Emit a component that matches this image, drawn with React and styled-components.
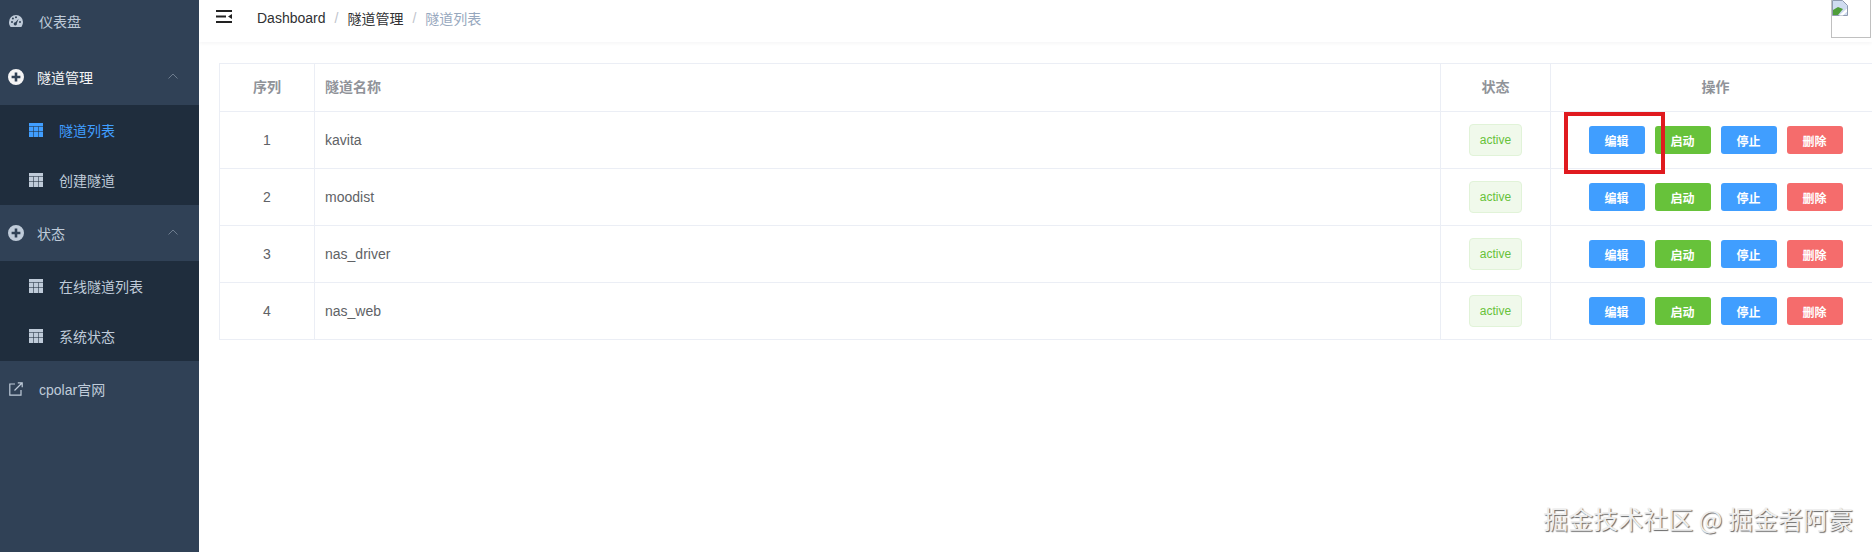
import React from "react";
import styled, { createGlobalStyle } from "styled-components";

const GlobalStyle = createGlobalStyle`
  html, body {
    margin: 0;
    height: 100%;
    overflow: hidden;
    background: #fff;
    font-family: "Liberation Sans", "Noto Sans CJK SC", sans-serif;
  }
`;

const Page = styled.div`
  display: flex;
  width: 1872px;
  height: 552px;
  overflow: hidden;
`;

const Sidebar = styled.nav`
  flex: 0 0 199px;
  background: #304156;
  font-size: 14px;
`;

const MenuItem = styled.div`
  display: flex;
  align-items: center;
  height: ${(p) => p.$height || 56}px;
  padding-bottom: ${(p) => p.$bottom || 0}px;
  box-sizing: border-box;
  padding-left: ${(p) => p.$indent}px;
  color: ${(p) => (p.$lit ? "#f4f4f5" : "#bfcbd9")};
`;

const MenuLabel = styled.span`
  margin-left: ${(p) => p.$gap}px;
`;

const Chevron = styled.svg`
  margin-left: auto;
  margin-right: 21px;
  margin-top: -2px;
`;

const SubMenu = styled.div`
  background: #1f2d3d;
`;

const SubItem = styled.div`
  display: flex;
  align-items: center;
  height: 50px;
  padding-left: 29px;
  color: ${(p) => (p.$active ? "#409eff" : "#bfcbd9")};
`;

const SubLabel = styled.span`
  margin-left: 16px;
`;

const Main = styled.main`
  flex: 1;
  min-width: 0;
  overflow: hidden;
`;

const Navbar = styled.header`
  display: flex;
  align-items: flex-start;
  height: 42px;
  box-shadow: 0 1px 4px rgba(0, 21, 41, 0.05);
`;

const Hamburger = styled.svg`
  margin: 10px 0 0 17px;
`;

const Crumbs = styled.div`
  display: flex;
  align-items: center;
  height: 36px;
  margin-left: 25px;
  font-size: 14px;
  color: #303133;
`;

const CrumbSep = styled.span`
  margin: 0 9px;
  color: #c0c4cc;
`;

const CrumbLast = styled.span`
  color: #97a8be;
`;

const Avatar = styled.div`
  width: 38px;
  height: 37px;
  margin-left: auto;
  margin-right: 1px;
  border: 1px solid #c0c0c0;
  border-top: 0;
`;

const Content = styled.div`
  padding: 21px 0 0 20px;
`;

const Table = styled.table`
  width: 1661px;
  table-layout: fixed;
  border-collapse: collapse;
  font-size: 14px;
  color: #606266;
`;

const Th = styled.th`
  width: ${(p) => p.$w}px;
  height: 48px;
  padding: 0 ${(p) => (p.$left ? "10px" : "0")} 4px;
  box-sizing: border-box;
  border: 1px solid #ebeef5;
  font-weight: 700;
  color: #909399;
  text-align: ${(p) => (p.$left ? "left" : "center")};
`;

const Td = styled.td`
  position: relative;
  height: 57px;
  padding: 0 ${(p) => (p.$left ? "10px" : "0")};
  box-sizing: border-box;
  border: 1px solid #ebeef5;
  text-align: ${(p) => (p.$left ? "left" : "center")};
`;

const Tag = styled.span`
  display: inline-block;
  height: 32px;
  line-height: 30px;
  padding: 0 10px;
  box-sizing: border-box;
  background: #f0f9eb;
  border: 1px solid #e1f3d8;
  border-radius: 4px;
  color: #67c23a;
  font-size: 12px;
  vertical-align: middle;
`;

const Actions = styled.div`
  display: flex;
  justify-content: center;
  gap: 10px;
`;

const Button = styled.button`
  width: 56px;
  height: 28px;
  padding: 0;
  border: 0;
  border-radius: 3px;
  background: ${(p) => p.$color};
  color: #fff;
  font: inherit;
  font-size: 12px;
  font-weight: 700;
`;

const Highlight = styled.div`
  position: absolute;
  left: 13px;
  top: 0;
  width: 101px;
  height: 62px;
  box-sizing: border-box;
  border: 4px solid #e01a1f;
  z-index: 2;
`;

const Watermark = styled.div`
  position: absolute;
  right: 19px;
  bottom: 19px;
  font-size: 25px;
  line-height: 30px;
  color: #eeeeee;
  font-family: "Noto Sans CJK SC", sans-serif;
  text-shadow: 1px 1px 1px #666, -1px -1px 0 #fff;
`;

const GaugeIcon = () => (
  <svg width="14" height="12" viewBox="0 0 14 12">
    <path
      fill="#bfcbd9"
      fillRule="evenodd"
      d="M7 0a7 7 0 0 1 7 7c0 1.8-.6 3.5-1.6 5H1.6A7 7 0 0 1 0 7a7 7 0 0 1 7-7zM3 6a1 1 0 1 0 0 2 1 1 0 0 0 0-2zm8 0a1 1 0 1 0 0 2 1 1 0 0 0 0-2zM3.900 2.500a1 1 0 1 0 0 2 1 1 0 0 0 0-2zM7 1.300a1 1 0 1 0 0 2 1 1 0 0 0 0-2zm2.600 2.400L6.400 7.200a1.600 1.600 0 1 0 1.400 1.200z"
    />
  </svg>
);

const PlusCircle = ({ color }) => (
  <svg width="16" height="16" viewBox="0 0 16 16">
    <path
      fill={color}
      fillRule="evenodd"
      d="M8 0a8 8 0 1 1 0 16A8 8 0 0 1 8 0zM6.700 3.600v3.100H3.600v2.600h3.100v3.100h2.600V9.300h3.100V6.700H9.300V3.600z"
    />
  </svg>
);

const GridIcon = ({ color }) => (
  <svg width="14" height="14" viewBox="0 0 14 14">
    <path fill={color} d="M0 0h14v14H0z" />
    <path stroke="#1f2d3d" strokeOpacity=".55" fill="none" d="M0 3.500h14M0 8.500h14M4.500 3.500V14M9.500 3.500V14" />
  </svg>
);

const LinkIcon = () => (
  <svg width="14" height="14" viewBox="0 0 14 14" fill="none" stroke="#bfcbd9" strokeWidth="1.2">
    <path d="M6 2H.8v11.200H12V8" />
    <path d="M5.500 8.500 13 1M8.800.8h4.400v4.400" />
  </svg>
);

const UpArrow = () => (
  <Chevron width="10" height="6" viewBox="0 0 10 6" fill="none" stroke="#6d7c8e" strokeWidth="1">
    <path d="M.5 5.500 5 1l4.500 4.500" />
  </Chevron>
);

const BrokenImage = () => (
  <svg width="16" height="16" viewBox="0 0 16 16" style={{ display: "block" }}>
    <path fill="#cfdcf0" stroke="#8f9bb0" d="M.5.500h10l5 5v10H.5z" />
    <path fill="#4f9e3a" d="M1 15V10l5-3 5 2-5 6z" />
    <path fill="#fff" d="M7 15.500l8-7v3l-4 4z" />
  </svg>
);

const tunnels = ["kavita", "moodist", "nas_driver", "nas_web"];

const buttons = [
  { label: "编辑", color: "#409eff" },
  { label: "启动", color: "#67c23a" },
  { label: "停止", color: "#409eff" },
  { label: "删除", color: "#f56c6c" },
];

export default function App() {
  return (
    <Page>
      <GlobalStyle />
      <Sidebar>
        <MenuItem $indent={9} $height={49} $bottom={8}>
          <GaugeIcon />
          <MenuLabel $gap={16}>仪表盘</MenuLabel>
        </MenuItem>
        <MenuItem $indent={8} $lit>
          <PlusCircle color="#f4f4f5" />
          <MenuLabel $gap={13}>隧道管理</MenuLabel>
          <UpArrow />
        </MenuItem>
        <SubMenu>
          <SubItem $active>
            <GridIcon color="#409eff" />
            <SubLabel>隧道列表</SubLabel>
          </SubItem>
          <SubItem>
            <GridIcon color="#bfcbd9" />
            <SubLabel>创建隧道</SubLabel>
          </SubItem>
        </SubMenu>
        <MenuItem $indent={8}>
          <PlusCircle color="#bfcbd9" />
          <MenuLabel $gap={13}>状态</MenuLabel>
          <UpArrow />
        </MenuItem>
        <SubMenu>
          <SubItem>
            <GridIcon color="#bfcbd9" />
            <SubLabel>在线隧道列表</SubLabel>
          </SubItem>
          <SubItem>
            <GridIcon color="#bfcbd9" />
            <SubLabel>系统状态</SubLabel>
          </SubItem>
        </SubMenu>
        <MenuItem $indent={9}>
          <LinkIcon />
          <MenuLabel $gap={16}>cpolar官网</MenuLabel>
        </MenuItem>
      </Sidebar>
      <Main>
        <Navbar>
          <Hamburger width="16" height="13" viewBox="0 0 16 13">
            <path fill="#222" d="M0 0h16v2H0zM0 5.500h10v2H0zM0 11h16v2H0zM16 4v5l-4-2.500z" />
          </Hamburger>
          <Crumbs>
            <span>Dashboard</span>
            <CrumbSep>/</CrumbSep>
            <span>隧道管理</span>
            <CrumbSep>/</CrumbSep>
            <CrumbLast>隧道列表</CrumbLast>
          </Crumbs>
          <Avatar>
            <BrokenImage />
          </Avatar>
        </Navbar>
        <Content>
          <Table>
            <thead>
              <tr>
                <Th $w={95}>序列</Th>
                <Th $w={1126} $left>隧道名称</Th>
                <Th $w={110}>状态</Th>
                <Th $w={330}>操作</Th>
              </tr>
            </thead>
            <tbody>
              {tunnels.map((name, i) => (
                <tr key={name}>
                  <Td>{i + 1}</Td>
                  <Td $left>{name}</Td>
                  <Td><Tag>active</Tag></Td>
                  <Td>
                    <Actions>
                      {buttons.map((b) => (
                        <Button key={b.label} $color={b.color}>{b.label}</Button>
                      ))}
                    </Actions>
                    {i === 0 && <Highlight />}
                  </Td>
                </tr>
              ))}
            </tbody>
          </Table>
        </Content>
      </Main>
      <Watermark>掘金技术社区 @ 掘金者阿豪</Watermark>
    </Page>
  );
}
